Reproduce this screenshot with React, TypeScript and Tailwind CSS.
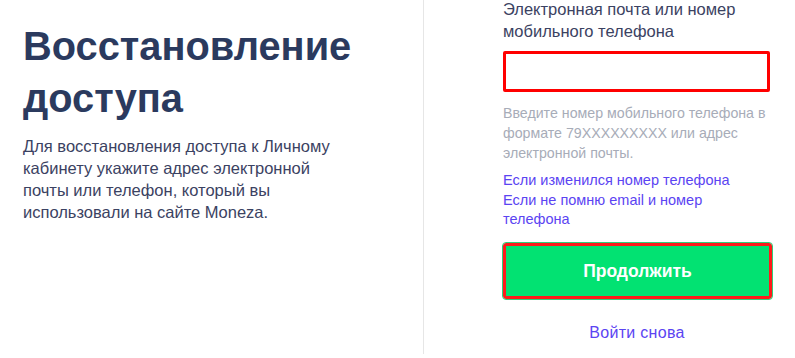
export default function App() {
  return (
    <div className="flex h-[358px] w-[795px] overflow-hidden bg-white font-['Liberation_Sans',Arial,sans-serif]">
      <div className="h-[354px] w-[424px] shrink-0 border-r border-[#e6e6e6] pl-[23px] pt-[20px]">
        <h1 className="text-[39.8px] font-bold leading-[52px] text-[#2b3a5e]">
          Восстановление
          <br />
          доступа
        </h1>
        <p className="mt-[11px] w-[320px] text-[16.5px] leading-[22px] text-[#3b4262]">
          Для восстановления доступа к Личному кабинету укажите адрес электронной почты или
          телефон, который вы использовали на сайте Moneza.
        </p>
      </div>

      <div className="box-content flex w-[268px] flex-col pl-[79px]">
        <label className="-mt-[2px] text-[16.5px] leading-[22px] text-[#3b4262]">
          Электронная почта или номер мобильного телефона
        </label>
        <input
          type="text"
          className="mt-[9px] h-[41px] w-[267px] rounded-[2px] border-[3px] border-[#ff0000] outline-none"
        />
        <p className="mt-[11px] text-[14.2px] leading-[20px] text-[#a7acb8]">
          Введите номер мобильного телефона в формате 79XXXXXXXXX или адрес электронной почты.
        </p>
        <div className="mt-[8px] flex flex-col text-[14.5px] leading-[19.5px] text-[#5b44f2]">
          <a href="#">Если изменился номер телефона</a>
          <a href="#">Если не помню email и номер телефона</a>
        </div>
        <button className="mt-[13px] h-[56px] w-[269px] rounded-[3px] border-[3px] border-[#ff1a1a] pt-[2px] bg-[#02e272] text-[17.5px] font-bold text-white outline outline-1 outline-[#2fd07a]">
          Продолжить
        </button>
        <a href="#" className="mt-[23px] text-center text-[16px] leading-[22px] tracking-[0.3px] text-[#5b44f2]">
          Войти снова
        </a>
      </div>
    </div>
  )
}
